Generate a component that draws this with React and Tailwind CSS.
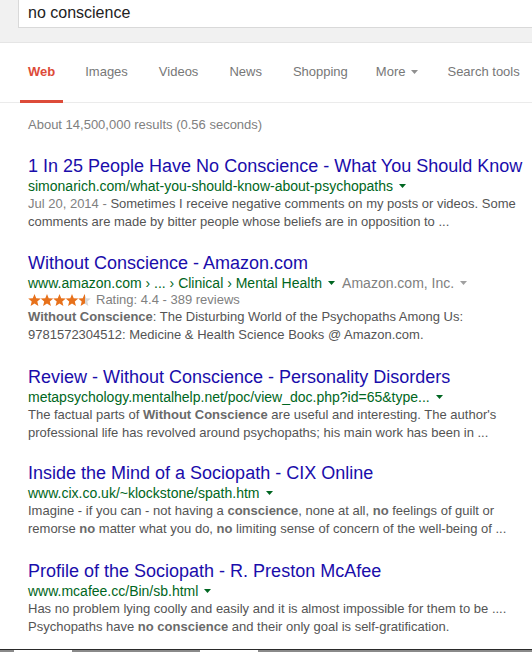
import React from "react";

const font = { fontFamily: '"Liberation Sans", Arial, sans-serif' };

function Caret({ color = "#006621" }) {
    return (
        <svg width="7" height="4" viewBox="0 0 7 4" className="inline-block ml-[6px] mb-[2px]">
            <polygon points="0,0 7,0 3.5,4" fill={color} />
        </svg>
    );
}

function Stars() {
    const pts = "6.5,0 8.2,4.3 12.8,4.6 9.3,7.6 10.4,12 6.5,9.6 2.6,12 3.7,7.6 0.2,4.6 4.8,4.3";
    return (
        <svg width="64" height="12" viewBox="0 0 64 12" className="inline-block mr-[4px]">
            <defs>
                <linearGradient id="part">
                    <stop offset="55%" stopColor="#e7711b" />
                    <stop offset="55%" stopColor="#d6d6d6" />
                </linearGradient>
            </defs>
            {[0, 1, 2, 3, 4].map((i) => (
                <polygon key={i} points={pts} transform={`translate(${i * 12.5},0)`} fill={i === 4 ? "url(#part)" : "#e7711b"} />
            ))}
        </svg>
    );
}

function Result({ title, url, extra, rating, lines, className }) {
    return (
        <div className={className}>
            <div className="text-[18px] leading-[22px] text-[#1a0dab] whitespace-nowrap">{title}</div>
            <div className="text-[14px] leading-[18px] text-[#006621] whitespace-nowrap">
                {url}
                <Caret />
                {extra && (
                    <span className="text-[#808080] ml-[7px]">
                        {extra}
                        <Caret color="#a0a0a0" />
                    </span>
                )}
            </div>
            {rating && (
                <div className="text-[13px] leading-[16px] text-[#808080] whitespace-nowrap flex items-center">
                    <Stars />
                    {rating}
                </div>
            )}
            <div className="text-[13px] leading-[18px] text-[#545454]">
                {lines.map((l, i) => (
                    <div key={i} className="whitespace-nowrap">{l}</div>
                ))}
            </div>
        </div>
    );
}

const B = ({ children }) => <b className="font-bold text-[#6a6a6a]">{children}</b>;

export default function App() {
    return (
        <div className="w-[532px] h-[652px] bg-white overflow-hidden flex flex-col" style={font}>
            <div className="h-[43px] bg-[#f1f1f1] border-b border-[#e5e5e5] pl-[18px] shrink-0">
                <div className="h-[28px] bg-white border border-t-0 border-r-0 border-[#d9d9d9] pl-[9px] flex items-center text-[16px] text-[#222] pb-[1px]">
                    no conscience
                </div>
            </div>
            <div className="h-[60px] border-b border-[#ebebeb] flex items-stretch pl-[20px] text-[13px] text-[#777] shrink-0">
                <div className="px-[8px] pt-[19px] border-b-[3px] border-[#dd4b39] text-[#dd4b39] font-bold -mb-px h-[60px] box-border">
                    Web
                </div>
                <div className="pt-[19px] ml-[22px]">Images</div>
                <div className="pt-[19px] ml-[31px]">Videos</div>
                <div className="pt-[19px] ml-[31px]">News</div>
                <div className="pt-[19px] ml-[31px]">Shopping</div>
                <div className="pt-[19px] ml-[28px]">
                    More
                    <Caret color="#909090" />
                </div>
                <div className="pt-[19px] ml-[29px] whitespace-nowrap">Search tools</div>
            </div>
            <div className="pl-[28px] pt-[13px] text-[13px] leading-[18px] text-[#808080] shrink-0">
                About 14,500,000 results (0.56 seconds)
            </div>
            <div className="pl-[28px] pt-[21px] flex flex-col">
                <Result
                    className="mb-[21px]"
                    title="1 In 25 People Have No Conscience - What You Should Know"
                    url="simonarich.com/what-you-should-know-about-psychopaths"
                    lines={[
                        <><span className="text-[#808080]">Jul 20, 2014 - </span>Sometimes I receive negative comments on my posts or videos. Some</>,
                        "comments are made by bitter people whose beliefs are in opposition to ...",
                    ]}
                />
                <Result
                    className="mb-[22px]"
                    title="Without Conscience - Amazon.com"
                    url="www.amazon.com › ... › Clinical › Mental Health"
                    extra="Amazon.com, Inc."
                    rating="Rating: 4.4 - 389 reviews"
                    lines={[
                        <><B>Without Conscience</B>: The Disturbing World of the Psychopaths Among Us:</>,
                        "9781572304512: Medicine & Health Science Books @ Amazon.com.",
                    ]}
                />
                <Result
                    className="mb-[20px]"
                    title="Review - Without Conscience - Personality Disorders"
                    url="metapsychology.mentalhelp.net/poc/view_doc.php?id=65&type..."
                    lines={[
                        <>The factual parts of <B>Without Conscience</B> are useful and interesting. The author's</>,
                        "professional life has revolved around psychopaths; his main work has been in ...",
                    ]}
                />
                <Result
                    className="mb-[22px]"
                    title="Inside the Mind of a Sociopath - CIX Online"
                    url="www.cix.co.uk/~klockstone/spath.htm"
                    lines={[
                        <>Imagine - if you can - not having a <B>conscience</B>, none at all, <B>no</B> feelings of guilt or</>,
                        <>remorse <B>no</B> matter what you do, <B>no</B> limiting sense of concern of the well-being of ...</>,
                    ]}
                />
                <Result
                    title="Profile of the Sociopath - R. Preston McAfee"
                    url="www.mcafee.cc/Bin/sb.html"
                    lines={[
                        "Has no problem lying coolly and easily and it is almost impossible for them to be ....",
                        <>Psychopaths have <B>no conscience</B> and their only goal is self-gratification.</>,
                    ]}
                />
            </div>
            <div className="mt-auto shrink-0">
                <div className="h-px bg-[#2a2a2a]" />
                <div className="h-[2px] flex">
                    <div className="w-[14px] bg-[#8a8a8a]" />
                    <div className="w-[58px] bg-white" />
                    <div className="w-[128px] bg-[#8a8a8a]" />
                    <div className="w-[58px] bg-white" />
                    <div className="flex-1 bg-[#8a8a8a]" />
                </div>
            </div>
        </div>
    );
}
